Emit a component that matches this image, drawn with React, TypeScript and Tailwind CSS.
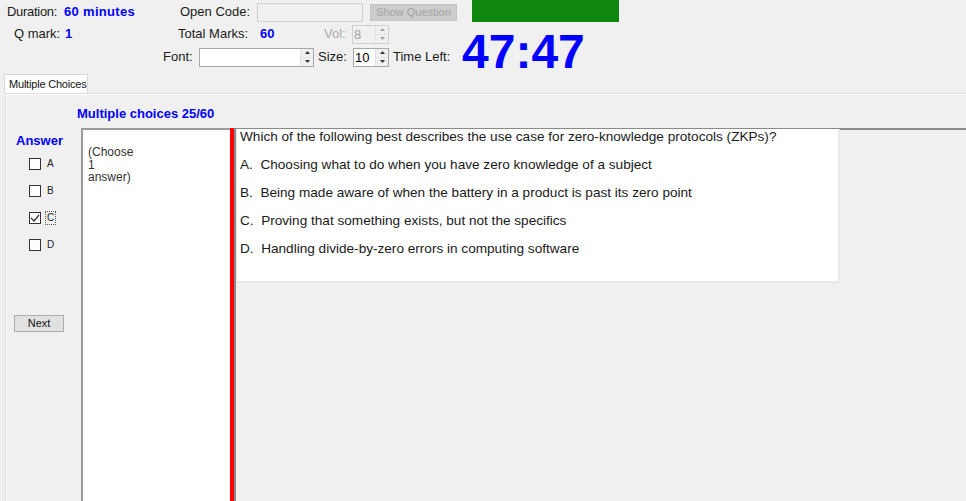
const Spin = ({ value, disabled, w }: { value: string; disabled?: boolean; w: string }) => {
  return (
    <div
      className={`${w} h-[19px] flex border ${
        disabled ? "border-[#cfcfcf] bg-[#f0f0f0] text-[#a0a0a0]" : "border-[#a8a8a8] bg-white text-black"
      }`}
    >
      <span className="flex-1 pl-[1px] text-[13px] leading-[17px]">{value}</span>
      <div className="w-[13px] flex flex-col border-l border-[#e2e2e2] bg-[#f0f0f0]">
        <div className="flex-1 flex items-center justify-center border-b border-[#e2e2e2]">
          <svg width="5" height="3" viewBox="0 0 5 3">
            <path d="M0 3 L2.5 0 L5 3 Z" fill={disabled ? "#a0a0a0" : "#333"} />
          </svg>
        </div>
        <div className="flex-1 flex items-center justify-center">
          <svg width="5" height="3" viewBox="0 0 5 3">
            <path d="M0 0 L2.5 3 L5 0 Z" fill={disabled ? "#a0a0a0" : "#333"} />
          </svg>
        </div>
      </div>
    </div>
  );
};

const Check = ({ label, checked }: { label: string; checked?: boolean }) => {
  return (
    <div className="flex items-center h-[12px] pl-[23px]">
      <div className="w-[12px] h-[12px] border border-[#333] bg-white flex items-center justify-center">
        {checked && (
          <svg width="10" height="10" viewBox="0 0 10 10">
            <path d="M1 5 L4 8 L9 2" stroke="#333" strokeWidth="1.2" fill="none" />
          </svg>
        )}
      </div>
      <span
        className={`ml-[4px] text-[10px] leading-[12px] text-[#222] px-[1px] ${
          checked ? "border border-dotted border-[#555]" : "border border-transparent"
        }`}
      >
        {label}
      </span>
    </div>
  );
};

const App = () => {
  return (
    <div className="w-[966px] h-[501px] overflow-hidden bg-[#f0f0f0] flex flex-col font-['Liberation_Sans',Arial,sans-serif] text-[13px] text-[#1a1a1a]">
      {/* Header row 1 */}
      <div className="h-[24px] flex items-center pl-[7px]">
        <div className="w-[173px] flex">
          <span className="tracking-[-0.3px]">Duration:</span>
          <span className="ml-[7px] font-bold text-[#0000ff] tracking-[0.3px]">60 minutes</span>
        </div>
        <span className="w-[77px]">Open Code:</span>
        <div className="w-[106px] h-[19px] border border-[#d0d0d0] bg-[#f0f0f0]"></div>
        <div className="ml-[7px] w-[87px] h-[17px] bg-[#cccccc] border border-[#c4c4c4] flex items-center justify-center text-[11px] text-[#a3a3a3]">
          Show Question
        </div>
        <div className="ml-[15px] w-[147px] h-[24px] -mt-[2px] self-start bg-[#0f870f]"></div>
      </div>

      {/* Header row 2 */}
      <div className="h-[20px] flex items-center pl-[14px]">
        <span className="w-[51px]">Q mark:</span>
        <span className="w-[113px] font-bold text-[#0000ff]">1</span>
        <span className="w-[82px]">Total Marks:</span>
        <span className="w-[64px] font-bold text-[#0000ff]">60</span>
        <span className="w-[28px] text-[#a8a8a8]">Vol:</span>
        <Spin value="8" disabled w="w-[37px]" />
      </div>

      {/* Header row 3 */}
      <div className="h-[26px] flex items-center pl-[163px]">
        <span className="w-[36px]">Font:</span>
        <div className="w-[115px] h-[19px] flex border border-[#a8a8a8] bg-white">
          <span className="flex-1"></span>
          <div className="w-[13px] flex flex-col border-l border-[#e2e2e2] bg-[#f0f0f0]">
            <div className="flex-1 flex items-center justify-center border-b border-[#e2e2e2]">
              <svg width="5" height="3" viewBox="0 0 5 3">
                <path d="M0 3 L2.5 0 L5 3 Z" fill="#333" />
              </svg>
            </div>
            <div className="flex-1 flex items-center justify-center">
              <svg width="5" height="3" viewBox="0 0 5 3">
                <path d="M0 0 L2.5 3 L5 0 Z" fill="#333" />
              </svg>
            </div>
          </div>
        </div>
        <span className="ml-[4px] w-[35px]">Size:</span>
        <Spin value="10" w="w-[36px]" />
        <span className="ml-[4px] w-[69px]">Time Left:</span>
        <span className="self-start -mt-[16px] text-[48px] leading-[48px] font-bold text-[#0000ff]">47:47</span>
      </div>

      {/* Tab */}
      <div className="mt-[4px] pl-[4px] flex">
        <div className="w-[84px] h-[19px] bg-white border border-b-0 border-[#d9d9d9] pl-[4px] text-[11px] leading-[18px] text-[#111] whitespace-nowrap tracking-[-0.2px]">
          Multiple Choices
        </div>
      </div>

      {/* Tab panel */}
      <div className="flex-1 ml-[5px] flex flex-col border-t border-l border-[#dcdcdc] shadow-[inset_1px_1px_0_#ffffff]">
        <div className="h-[34px] pl-[71px] pt-[12px] font-bold text-[#0000ff] leading-[15px]">
          Multiple choices 25/60
        </div>

        <div className="flex-1 flex">
          {/* Answer column */}
          <div className="w-[75px] flex flex-col">
            <div className="pl-[10px] pt-[5px] text-[13px] leading-[15px] font-bold text-[#0000ff]">Answer</div>
            <div className="mt-[10px] flex flex-col gap-[15px]">
              <Check label="A" />
              <Check label="B" />
              <Check label="C" checked />
              <Check label="D" />
            </div>
            <div className="mt-[64px] ml-[8px] w-[50px] h-[17px] bg-[#e1e1e1] border border-[#adadad] flex items-center justify-center text-[11px] text-[#111]">
              Next
            </div>
          </div>

          {/* Choose panel */}
          <div className="w-[149px] bg-white border-t-2 border-l-2 border-[#9a9a9a] pl-[5px] pt-[16px] text-[12px] leading-[12.5px] text-[#333]">
            (Choose
            <br />1
            <br />
            answer)
          </div>

          {/* Red bar */}
          <div className="w-[4px] bg-[#ff0000]"></div>

          {/* Question area */}
          <div className="flex-1 border-t-2 border-l-2 border-[#8a8a8a]">
            <div className="w-[604px] h-[154px] bg-white border-r-2 border-b-2 border-l border-[#e8e8e8] pl-[3px] -mt-[1px] flex flex-col gap-[12px] text-[13.6px] leading-[16px] text-[#1a1a1a] whitespace-pre">
              <p>Which of the following best describes the use case for zero-knowledge protocols (ZKPs)?</p>
              <p>A.  Choosing what to do when you have zero knowledge of a subject</p>
              <p>B.  Being made aware of when the battery in a product is past its zero point</p>
              <p>C.  Proving that something exists, but not the specifics</p>
              <p>D.  Handling divide-by-zero errors in computing software</p>
            </div>
          </div>
        </div>
      </div>
    </div>
  );
};

export default App;
